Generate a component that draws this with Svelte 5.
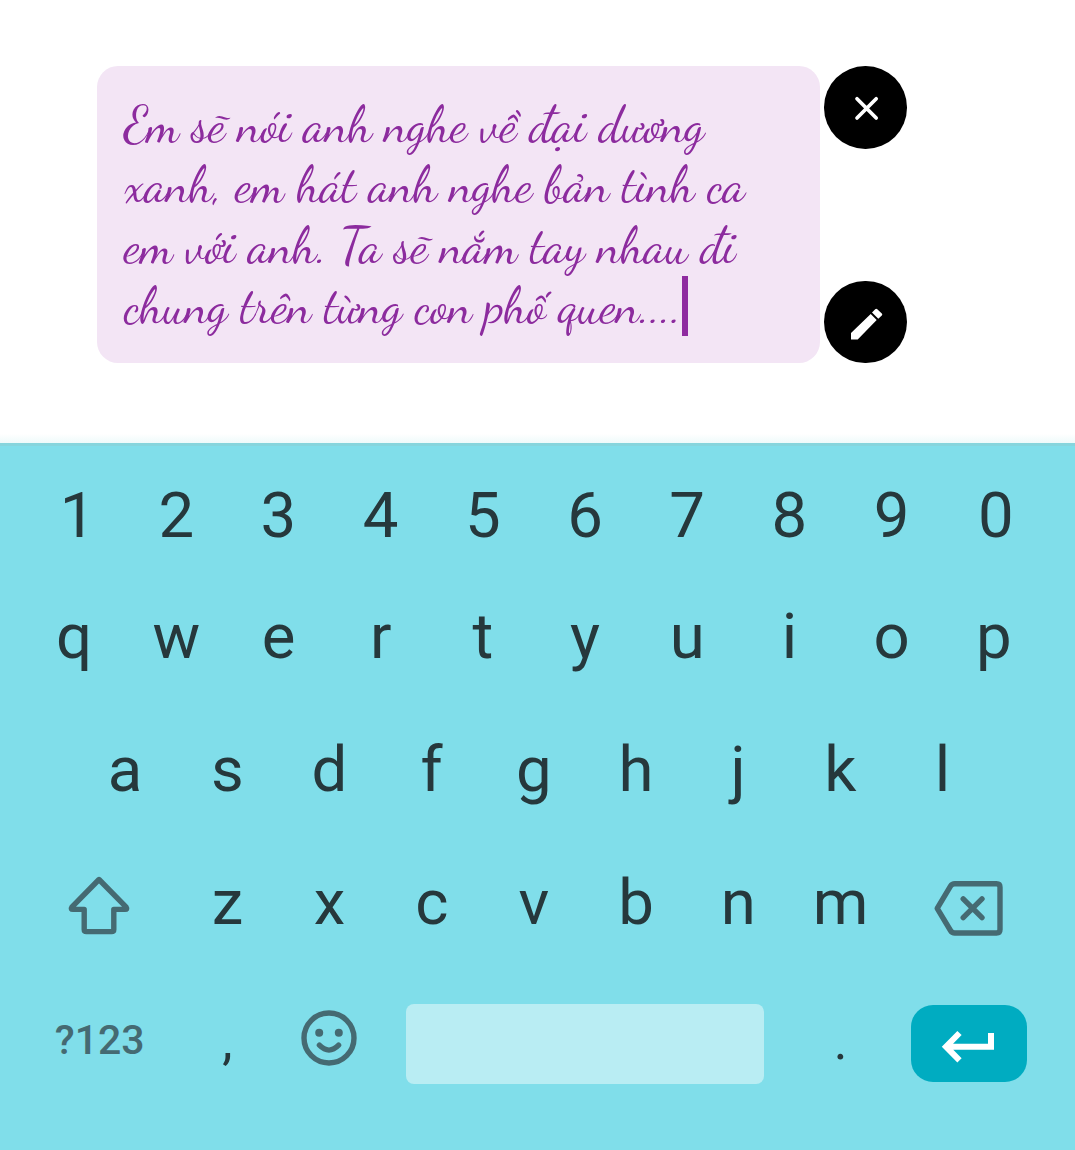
<script>
  const lines = [
    'Em sẽ nói anh nghe về đại dương',
    'xanh, em hát anh nghe bản tình ca',
    'em với anh. Ta sẽ nắm tay nhau đi',
    'chung trên từng con phố quen....'
  ];
  const digits = [...'1234567890'];
  const top = [...'qwertyuiop'];
  const home = [...'asdfghjkl'];
  const bottom = [...'zxcvbnm'];
</script>

<main class="screen">
  <section class="editor">
    <div class="note">
      {#each lines as line, i}
        <div class="line">
          <span>{line}</span>
          {#if i === lines.length - 1}<span class="caret"></span>{/if}
        </div>
      {/each}
    </div>
    <div class="actions">
      <button class="round" aria-label="Close">
        <svg viewBox="0 0 82.5 82.5"><path class="cross" d="M33 32.8 52.2 52M52.2 32.8 33 52" /></svg>
      </button>
      <button class="round" aria-label="Edit">
        <svg viewBox="0 0 82.5 82.5">
          <path fill="#fff" d="M46.7 33 52.7 39 33.7 58.5H27V52ZM48 31.5 51.2 28.2Q52.2 27.2 53.3 28.2L57.8 32.6Q58.8 33.6 57.8 34.6L54.3 37.8Z" />
        </svg>
      </button>
    </div>
  </section>

  <section class="keyboard">
    <div class="row digits">
      {#each digits as key}<span class="key">{key}</span>{/each}
    </div>
    <div class="row">
      {#each top as key}<span class="key">{key}</span>{/each}
    </div>
    <div class="row home">
      {#each home as key}<span class="key">{key}</span>{/each}
    </div>
    <div class="row letters">
      <span class="key shift">
        <svg class="icon" width="70" height="66" viewBox="0 0 70 66">
          <path d="M35 7.5 7.8 35.2Q6.3 37.4 9 37.4H20.2V57.5Q20.2 59.6 22.3 59.6H47.7Q49.8 59.6 49.8 57.5V37.4H61Q63.7 37.4 62.2 35.2Z" />
        </svg>
      </span>
      {#each bottom as key}<span class="key">{key}</span>{/each}
      <span class="key erase">
        <svg class="icon" width="80" height="66" viewBox="0 0 80 66">
          <path d="M9.2 33.3 22.5 11.2Q24 8.8 26.8 8.8H68.5Q72 8.8 72 12.3V54.5Q72 58 68.5 58H26.8Q24 58 22.5 55.5Z" />
          <path d="M35.2 23.9 54 42.7M54 23.9 35.2 42.7" />
        </svg>
      </span>
    </div>
    <div class="row functions">
      <span class="key mode">?123</span>
      <span class="key mark">,</span>
      <span class="key emoji">
        <svg class="icon" width="56" height="56" viewBox="-28 -28 56 56">
          <circle r="25" />
          <circle class="eye" cx="-9.8" cy="-5.3" r="4" />
          <circle class="eye" cx="9.8" cy="-5.3" r="4" />
          <path d="M-9.6 7.2Q0 17 9.6 7.2" />
        </svg>
      </span>
      <span class="space"></span>
      <span class="key mark">.</span>
      <button class="enter" aria-label="Enter">
        <svg width="116" height="77" viewBox="0 0 116 77">
          <path d="M48.5 28 35 41.7 48.5 55.3M35 41.7H80V28" />
        </svg>
      </button>
    </div>
  </section>
</main>

<style>
  :global(body) {
    margin: 0;
    background: #fff;
  }
  .screen {
    width: 1075px;
    height: 1150px;
    display: flex;
    flex-direction: column;
    overflow: hidden;
    background: #fff;
    font-family: Roboto, sans-serif;
  }
  .editor {
    box-sizing: border-box;
    height: 443px;
    flex: none;
    display: flex;
    align-items: flex-start;
    gap: 4px;
    padding: 66px 0 0 97px;
    background: linear-gradient(to bottom, #fff 434px, #eefafa 443px);
  }
  .note {
    box-sizing: border-box;
    width: 723px;
    height: 297px;
    padding: 29px 27px;
    border-radius: 21px;
    background: #f3e5f5;
    color: #8c2b9e;
    font-family: "Dancing Script", cursive;
    font-size: 50px;
    line-height: 60.3px;
    letter-spacing: -0.21px;
    white-space: nowrap;
  }
  .line {
    display: flex;
    height: 60.3px;
  }
  .caret {
    width: 6px;
    height: 60px;
    margin-left: 0.5px;
    background: #8f2ba0;
  }
  .actions {
    height: 297px;
    display: flex;
    flex-direction: column;
    justify-content: space-between;
  }
  button {
    padding: 0;
    border: 0;
  }
  .round {
    width: 82.5px;
    height: 82.5px;
    border-radius: 50%;
    background: #000;
  }
  .round svg,
  .enter svg {
    display: block;
  }
  .cross {
    fill: none;
    stroke: #fff;
    stroke-width: 3.7;
    stroke-linecap: round;
  }
  .keyboard {
    box-sizing: border-box;
    flex: 1;
    padding: 15px 30px 0 23px;
    border-top: 3px solid #86d5dd;
    background: #80deea;
    color: #26383c;
    font-size: 63.5px;
  }
  .row {
    display: grid;
    grid-template-columns: repeat(10, 102.2px);
    align-items: center;
    height: 133px;
  }
  .digits {
    height: 109px;
  }
  .digits .key:first-child {
    padding-left: 7px;
  }
  .digits .key:last-child {
    padding-left: 4px;
  }
  .home {
    grid-template-columns: repeat(9, 102.2px);
    padding-left: 51px;
  }
  .letters {
    grid-template-columns: 153.3px repeat(7, 102.2px) 153.3px;
  }
  .functions {
    grid-template-columns: 153.3px 102.2px 102.2px 408.8px 102.2px 153.3px;
    height: 150px;
  }
  .key {
    display: flex;
    justify-content: center;
    line-height: 74px;
  }
  .icon {
    display: block;
    fill: none;
    stroke: #456a72;
    stroke-width: 5.4;
    stroke-linecap: round;
    stroke-linejoin: round;
  }
  .shift {
    padding: 4px 1px 0 0;
  }
  .erase {
    padding-top: 10px;
  }
  .eye {
    fill: #456a72;
    stroke: none;
  }
  .mode {
    padding-bottom: 8px;
    font-size: 41px;
    font-weight: 500;
    color: #456a72;
  }
  .mark {
    padding-bottom: 5px;
    font-size: 52px;
  }
  .emoji {
    padding: 0 2px 13px 0;
  }
  .space {
    height: 80px;
    margin: 0 25.5px;
    border-radius: 8px;
    background: #b9edf3;
  }
  .enter {
    justify-self: center;
    width: 116px;
    height: 77px;
    margin: 0 0 2px 2px;
    border-radius: 22px;
    background: #00acc1;
  }
  .enter path {
    fill: none;
    stroke: #fff;
    stroke-width: 6;
    stroke-linejoin: miter;
  }
</style>
